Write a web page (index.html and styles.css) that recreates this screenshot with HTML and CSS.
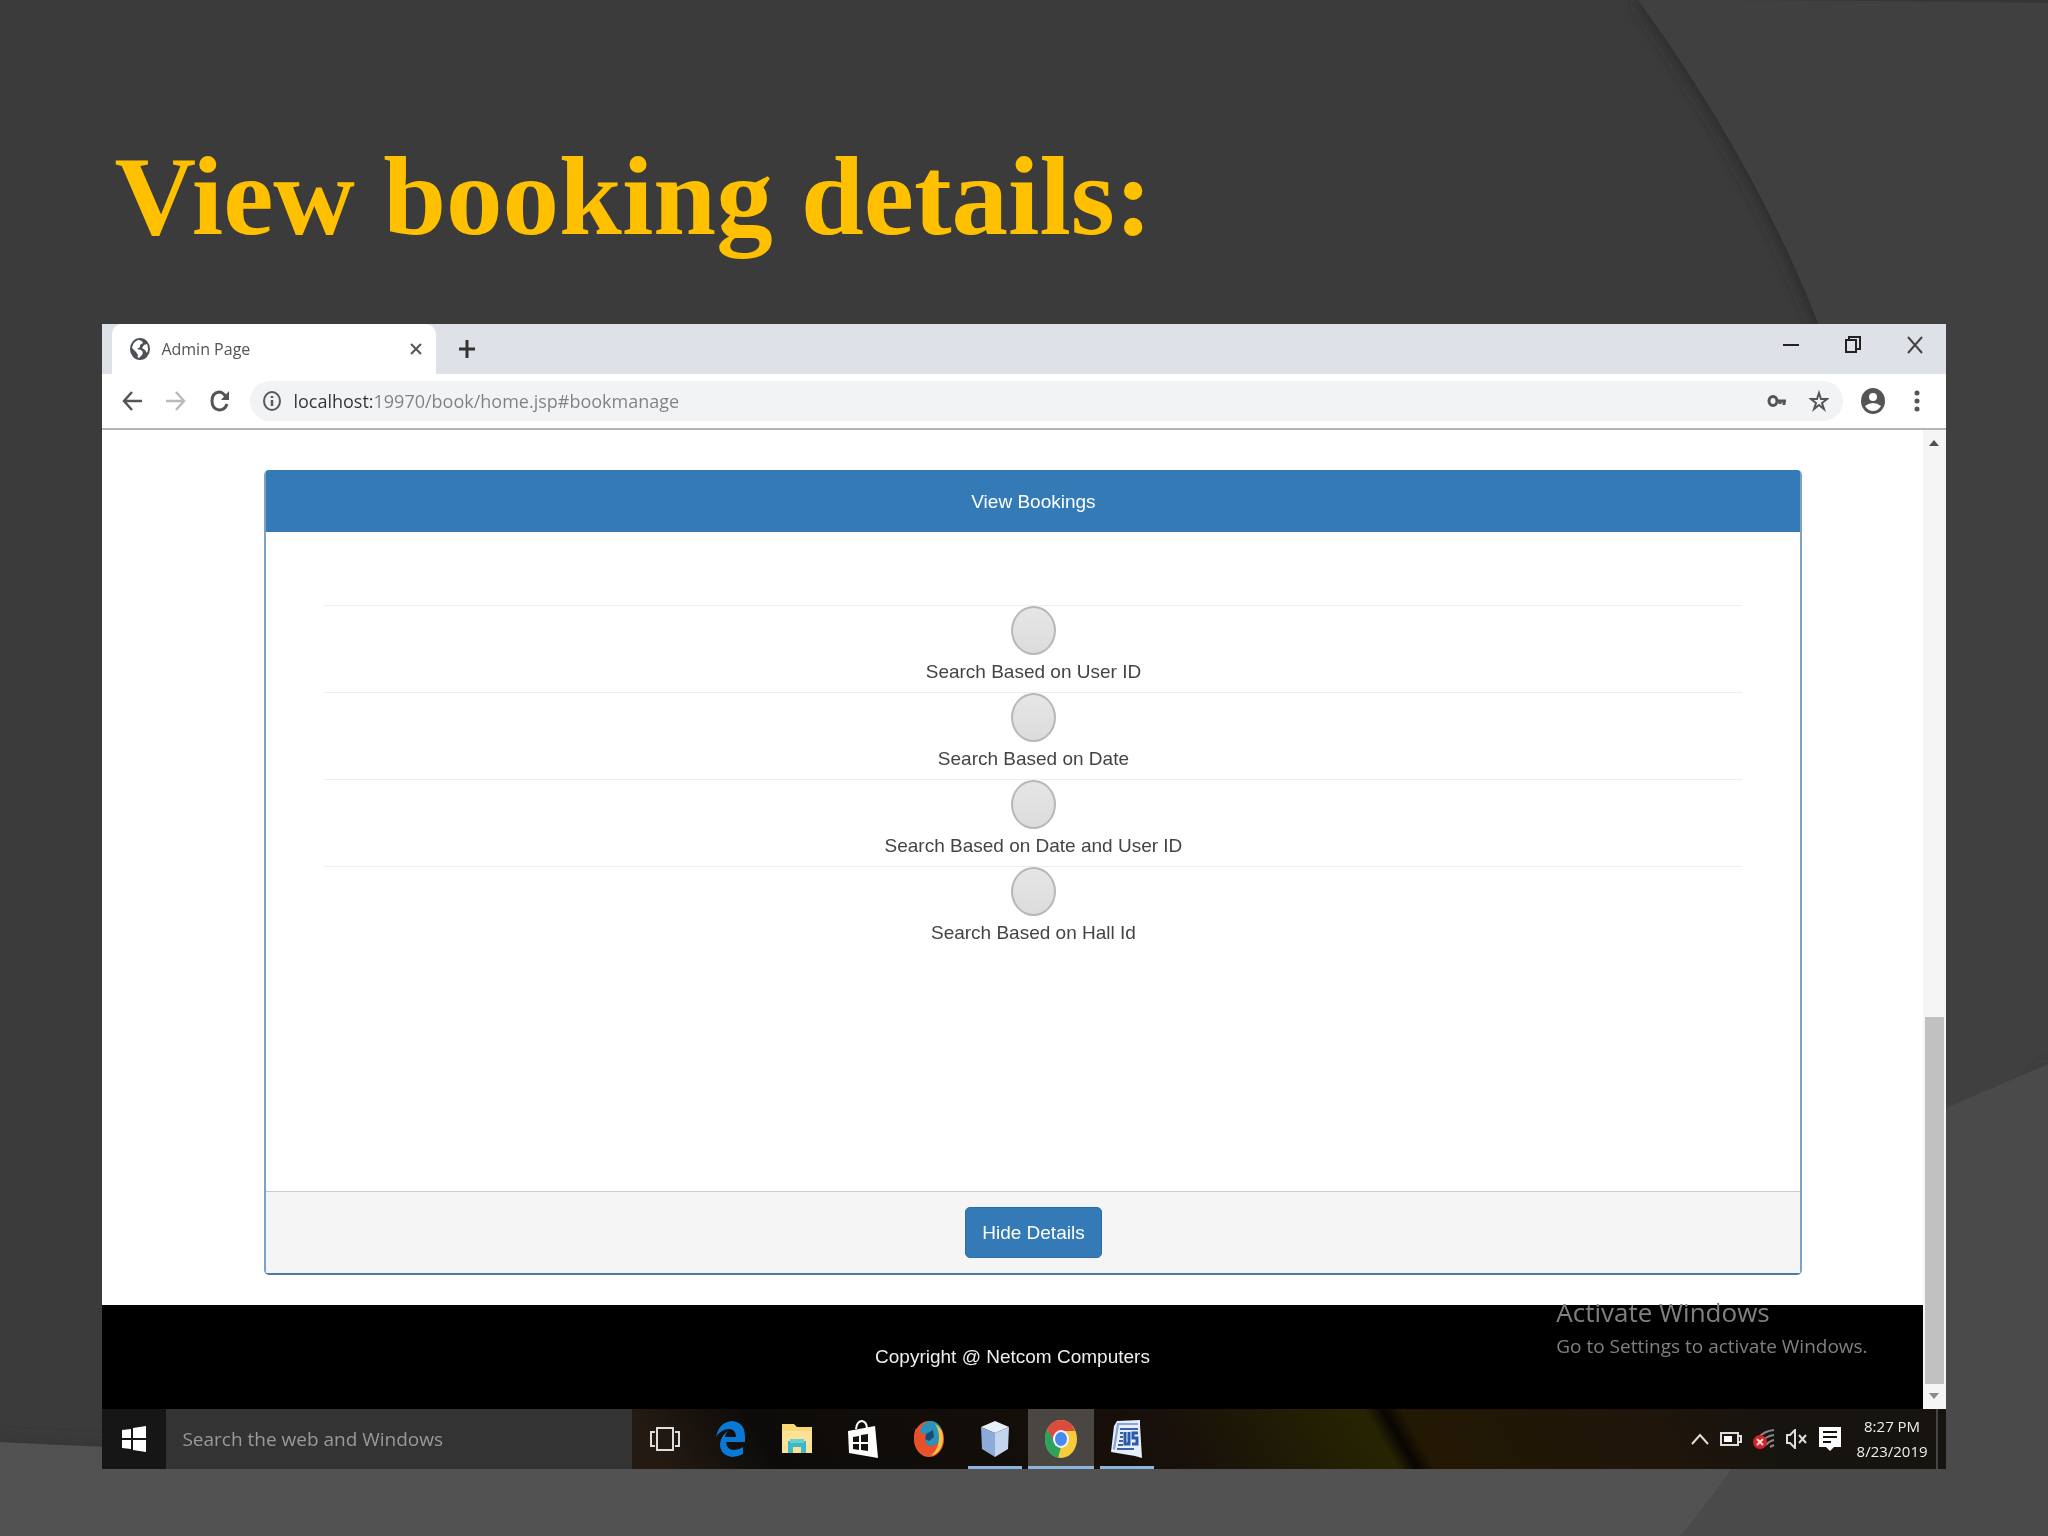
FILE: index.html
```
<!DOCTYPE html>
<html lang="en">
<head>
    <meta charset="UTF-8">
    <meta name="viewport" content="width=device-width, initial-scale=1.0">
    <title>View booking details</title>
    <link rel="stylesheet" href="styles.css">
</head>
<body>

<!-- slide background -->
<svg class="backdrop" viewBox="0 0 2048 1536" preserveAspectRatio="none" aria-hidden="true">
    <defs>
        <filter id="soft" x="-20%" y="-20%" width="140%" height="140%"><feGaussianBlur stdDeviation="7"/></filter>
        <linearGradient id="low" x1="0" y1="0" x2="0" y2="1">
            <stop offset="0" stop-color="#4f4f4f"/><stop offset="1" stop-color="#525252"/>
        </linearGradient>
    </defs>
    <rect width="2048" height="1536" fill="#3b3b3b"/>
    <path d="M1634 0Q1750 162 1814 323Q1900 600 1850 900L2048 900V0Z" fill="#2a2a2a" filter="url(#soft)"/>
    <path d="M1638 0Q1754 160 1818 323Q1900 600 1850 900L1850 1200H2048V0Z" fill="#404040"/>
    <path d="M1730 0H2048V3Q1900 1 1730 0Z" fill="#363636"/>
    <path d="M0 1438Q700 1480 1300 1366T2048 1062V1536H0Z" fill="#353535" filter="url(#soft)"/>
    <path d="M0 1442Q700 1480 1300 1370T2048 1064V1536H0Z" fill="url(#low)"/>
    <path d="M1680 1536Q1740 1465 1780 1390L1946 1108L2048 1064V1536Z" fill="#4a4a4a"/>
</svg>

<main class="slide">
    <h1 class="title">View booking details:</h1>

    <div class="screen">
        <div class="tabstrip">
            <div class="tab">
                <svg class="favicon" viewBox="0 0 20 22"><ellipse cx="10" cy="11" rx="10" ry="11" fill="#4d5156"/><path d="M8 2Q12 2 13 5L10 7V9L7 11L11 12Q14 14 12 17L9 20Q7 20 8 17L6 14L2 10Q3 4 8 2ZM14 7L17 6Q19 11 17 15L15 12L12 10Z" fill="#fff"/></svg>
                <span class="tab-name">Admin Page</span>
                <button class="icon-btn" aria-label="Close tab"><svg width="12" height="14" viewBox="0 0 12 14"><path d="M1 2L11 12M11 2L1 12" stroke="#555" stroke-width="2"/></svg></button>
            </div>
            <button class="icon-btn new-tab" aria-label="New tab"><svg width="18" height="20" viewBox="0 0 18 20"><path d="M9 1V19M1 10H17" stroke="#333" stroke-width="3"/></svg></button>
            <div class="win-buttons">
                <button class="icon-btn" aria-label="Minimize"><svg width="16" height="18" viewBox="0 0 16 18"><path d="M0 9H16" stroke="#222" stroke-width="2"/></svg></button>
                <button class="icon-btn" aria-label="Restore"><svg width="16" height="18" viewBox="0 0 16 18"><path d="M1 4H11V16H1ZM4 4V1H15V13H11" fill="none" stroke="#222" stroke-width="2"/></svg></button>
                <button class="icon-btn" aria-label="Close"><svg width="16" height="18" viewBox="0 0 16 18"><path d="M1 1L15 17M15 1L1 17" stroke="#444" stroke-width="2"/></svg></button>
            </div>
        </div>

        <div class="toolbar">
            <button class="icon-btn" aria-label="Back"><svg width="20" height="22" viewBox="0 0 20 22"><path d="M20 11H2M10 2L2 11L10 20" fill="none" stroke="#555" stroke-width="2.5"/></svg></button>
            <button class="icon-btn" aria-label="Forward"><svg width="20" height="22" viewBox="0 0 20 22"><path d="M0 11H18M10 2L18 11L10 20" fill="none" stroke="#bbb" stroke-width="2.5"/></svg></button>
            <button class="icon-btn" aria-label="Reload"><svg width="20" height="22" viewBox="0 0 20 22"><path d="M17 14Q15 20 9 20Q2 19 2 11Q2 3 9 2Q13 2 16 7" fill="none" stroke="#555" stroke-width="3"/><path d="M19 1V10H11Z" fill="#555"/></svg></button>
            <div class="omnibox">
                <svg width="20" height="22" viewBox="0 0 20 22"><ellipse cx="10" cy="11" rx="8" ry="9" fill="none" stroke="#5a5a5a" stroke-width="2"/><path d="M10 6V8M10 10V16" stroke="#5a5a5a" stroke-width="2.5"/></svg>
                <input class="url" type="text" aria-label="Address" value="localhost:19970/book/home.jsp#bookmanage">
                <svg width="20" height="14" viewBox="0 0 20 14"><ellipse cx="6" cy="7" rx="4" ry="4.500" fill="none" stroke="#555" stroke-width="3"/><path d="M9 7H19M17 7V11M13 7V10" stroke="#555" stroke-width="3" fill="none"/></svg>
                <svg class="star" width="20" height="22" viewBox="0 0 20 22"><path d="M10 3L12 9H18L13 13L15 19L10 15L5 19L7 13L2 9H8Z" fill="none" stroke="#555" stroke-width="2"/></svg>
            </div>
            <button class="icon-btn avatar" aria-label="Profile"><svg width="24" height="26" viewBox="0 0 24 26"><ellipse cx="12" cy="13" rx="12" ry="13" fill="#555"/><ellipse cx="12" cy="9" rx="4" ry="4" fill="#fff"/><path d="M4 18Q12 12 20 18Q17 23 12 23Q7 23 4 18Z" fill="#fff"/></svg></button>
            <button class="icon-btn" aria-label="Menu"><svg width="6" height="22" viewBox="0 0 6 22"><circle cx="3" cy="3" r="2.500" fill="#555"/><circle cx="3" cy="11" r="2.500" fill="#555"/><circle cx="3" cy="19" r="2.500" fill="#555"/></svg></button>
        </div>

        <div class="viewport">
            <div class="page">
                <form class="panel">
                    <div class="panel-heading">View Bookings</div>
                    <div class="panel-body">
                        <label class="option"><input type="radio" name="search" value="user">Search Based on User ID</label>
                        <label class="option"><input type="radio" name="search" value="date">Search Based on Date</label>
                        <label class="option"><input type="radio" name="search" value="both">Search Based on Date and User ID</label>
                        <label class="option"><input type="radio" name="search" value="hall">Search Based on Hall Id</label>
                    </div>
                    <div class="panel-footer"><button class="btn" type="button">Hide Details</button></div>
                </form>
                <footer class="copyright">Copyright @ Netcom Computers</footer>
            </div>
            <div class="scrollbar">
                <svg width="10" height="6" viewBox="0 0 10 6"><path d="M0 6L5 0L10 6Z" fill="#505050"/></svg>
                <div class="thumb"></div>
                <svg width="10" height="6" viewBox="0 0 10 6"><path d="M0 0L5 6L10 0Z" fill="#8c8c8c"/></svg>
            </div>
            <div class="watermark">
                <p class="wm-title">Activate Windows</p>
                <p class="wm-text">Go to Settings to activate Windows.</p>
            </div>
        </div>

        <div class="taskbar">
            <button class="start" aria-label="Start"><svg width="24" height="26" viewBox="0 0 24 26"><path d="M0 4L9 3V12H0ZM11 2L24 0V12H11ZM0 14H9V23L0 22ZM11 14H24V26L11 24Z" fill="#fff"/></svg></button>
            <input class="search" type="text" aria-label="Search" placeholder="Search the web and Windows">
            <div class="apps">
                <!-- task view -->
                <button class="app" aria-label="Task view"><svg width="30" height="24" viewBox="0 0 30 24"><path d="M7 1H23V23H7ZM5 5H1V19H5M25 5H29V19H25" fill="none" stroke="#ddd" stroke-width="2"/></svg></button>
                <!-- edge -->
                <button class="app" aria-label="Edge"><svg width="30" height="36" viewBox="0 0 30 36"><path d="M0 16Q3 1 16 0Q29 1 29 16V21H10Q11 29 18 29Q23 29 27 26V33Q22 36 16 36Q4 34 4 23Q5 14 12 10Q9 13 9 16H20Q20 9 14 8Q5 8 0 16Z" fill="#0a78d6"/></svg></button>
                <!-- file explorer -->
                <button class="app" aria-label="File Explorer"><svg width="30" height="30" viewBox="0 0 30 30"><path d="M0 0H12L15 3H30V29H0Z" fill="#f8d775"/><path d="M0 7H30V29H0Z" fill="#fbe297"/><path d="M6 17H24V29H19V23H11V29H6Z" fill="#3bb9c9"/><path d="M8 15H22V19H8Z" fill="#6ad0cf"/></svg></button>
                <!-- store -->
                <button class="app" aria-label="Store"><svg width="30" height="38" viewBox="0 0 30 38"><path d="M8 9Q9 1 14 1Q19 2 19 9" fill="none" stroke="#fff" stroke-width="2"/><path d="M0 11L27 6L30 38L1 33Z" fill="#fff"/><path d="M5 17L11 16V22H5ZM13 15L20 14V22H13ZM5 24H11V30L5 29ZM13 24H20V31L13 30Z" fill="#17120f"/></svg></button>
                <!-- firefox -->
                <button class="app" aria-label="Firefox"><svg width="32" height="38" viewBox="0 0 32 38"><ellipse cx="16" cy="19" rx="15" ry="18" fill="#e8582a"/><ellipse cx="18" cy="14" rx="11" ry="13" fill="#2a93b8"/><path d="M22 4Q30 8 30 18Q30 32 18 36Q26 28 26 18Q26 9 22 4Z" fill="#f6c245"/><path d="M3 8Q6 13 12 14L17 17L12 20Q13 26 19 26Q24 25 25 21Q25 32 15 34Q2 31 1 19Q1 12 3 8Z" fill="#e8502c"/><path d="M13 14L20 10L21 17L16 21L12 19Z" fill="#194a75"/></svg></button>
                <!-- netbeans -->
                <button class="app open" aria-label="NetBeans"><svg width="28" height="36" viewBox="0 0 28 36"><path d="M14 0L28 6L14 12L0 6Z" fill="#e8f0fb"/><path d="M0 6L14 12V36L1 28Z" fill="#8dabd9"/><path d="M28 6L14 12V36L27 28Z" fill="#c4d4ee"/></svg></button>
                <!-- chrome -->
                <button class="app open active" aria-label="Chrome"><svg width="32" height="38" viewBox="0 0 32 38"><ellipse cx="16" cy="19" rx="16" ry="19" fill="#f7cb3d"/><path d="M2 9Q7 0 16 0Q26 0 30 11H16L8 21Z" fill="#dd4b3e"/><path d="M2 9L10 23L16 27L13 38Q0 34 0 19Q0 13 2 9Z" fill="#2ca25a"/><ellipse cx="16" cy="19" rx="8" ry="9" fill="#f5f5f5"/><ellipse cx="16" cy="19" rx="6" ry="7" fill="#4a8af0"/></svg></button>
                <!-- word -->
                <button class="app open" aria-label="Word"><svg width="32" height="38" viewBox="0 0 32 38"><path d="M6 1L29 0V5L31 38L24 36L0 32L3 6Z" fill="#e7eefa"/><path d="M6 3H27V5H8L4 30L2 29Z" fill="#8aa6d6"/><path d="M9 9H27M9 13H12M9 17H12M8 21H12M7 25H12M6 29H23" stroke="#3a62a8" stroke-width="2"/><path d="M14 12V24H18V12M27 13H22V18H26V24H21" fill="none" stroke="#2b5aa8" stroke-width="3"/></svg></button>
            </div>
            <div class="tray">
                <svg width="18" height="12" viewBox="0 0 18 12"><path d="M1 11L9 2L17 11" fill="none" stroke="#ddd" stroke-width="2"/></svg>
                <svg width="22" height="16" viewBox="0 0 22 16"><path d="M1 2H18V14H1ZM18 5H21V11H18" fill="none" stroke="#ddd" stroke-width="2"/><path d="M4 5H12V11H4Z" fill="#fff"/></svg>
                <svg width="22" height="22" viewBox="0 0 22 22"><path d="M5 10Q11 3 21 2M9 14Q13 8 21 7M13 17Q16 13 21 12M17 19L21 17" fill="none" stroke="#888" stroke-width="2"/><ellipse cx="7" cy="14" rx="7" ry="7" fill="#d3222c"/><path d="M4 11L10 17M10 11L4 17" stroke="#ffd9d9" stroke-width="2"/></svg>
                <svg width="22" height="20" viewBox="0 0 22 20"><path d="M1 6H4L9 1V19L4 14H1Z" fill="none" stroke="#ddd" stroke-width="2"/><path d="M13 6L20 14M20 6L13 14" stroke="#ddd" stroke-width="2"/></svg>
                <svg width="22" height="24" viewBox="0 0 22 24"><path d="M0 0H22V20H15L11 24L7 20H0Z" fill="#fff"/><path d="M4 5H18M4 10H18M4 15H12" stroke="#17120f" stroke-width="2"/></svg>
                <div class="clock"><span>8:27 PM</span><span>8/23/2019</span></div>
            </div>
        </div>
    </div>
</main>

</body>
</html>
```
FILE: styles.css
```
* {
    box-sizing: border-box;
}

body {
    margin: 0;
    background-color: #3b3b3b;
    font-family: "Liberation Sans", Arial, sans-serif;
    font-size: 19px;
    color: #444;
}

button {
    font-family: inherit;
    cursor: pointer;
}

.backdrop {
    position: fixed;
    inset: 0;
    width: 100%;
    height: 100%;
    z-index: -1;
}

.slide {
    min-height: 100vh;
    padding: 132px 5% 68px;
}

.title {
    margin: 0 12px 64px;
    font-family: "Liberation Serif", "Times New Roman", serif;
    font-size: 113px;
    line-height: 128px;
    font-weight: bold;
    color: #ffc000;
}

.screen {
    background-color: #fff;
}

.icon-btn {
    display: flex;
    padding: 0;
    border: none;
    background: none;
}

/* browser tabs */
.tabstrip {
    display: flex;
    align-items: center;
    height: 50px;
    padding-left: 10px;
    background-color: #dee1e8;
    font-family: "Open Sans", "Noto Sans", sans-serif;
}

.tab {
    display: flex;
    align-items: center;
    width: 324px;
    height: 50px;
    padding: 0 14px 0 18px;
    border-radius: 10px 10px 0 0;
    background-color: #fff;
}

.favicon {
    width: 20px;
    height: 22px;
}

.tab-name {
    flex: 1;
    margin-left: 11px;
    font-size: 16px;
    color: #555;
}

.new-tab {
    margin-left: 22px;
}

.win-buttons {
    display: flex;
    gap: 46px;
    margin-left: auto;
    padding: 0 23px 8px 0;
}

.toolbar {
    display: flex;
    align-items: center;
    gap: 24px;
    height: 56px;
    padding: 0 26px 0 20px;
    border-bottom: 2px solid #b5b5b5;
}

.omnibox {
    display: flex;
    flex: 1;
    align-items: center;
    height: 40px;
    margin-left: -4px;
    padding: 0 14px 0 12px;
    border-radius: 20px;
    background-color: #f1f3f5;
}

.url {
    flex: 1;
    margin-left: 11px;
    padding: 0;
    border: none;
    font-family: "Open Sans", "Noto Sans", sans-serif;
    font-size: 18px;
    color: #777;
    /* host part is darker than the path */
    background: linear-gradient(90deg, #333 82px, #808080 82px);
    -webkit-background-clip: text;
    background-clip: text;
    -webkit-text-fill-color: transparent;
}

.star {
    margin-left: 22px;
}

.avatar {
    margin: 0 5px 0 -6px;
}

/* page shown in the browser */
.viewport {
    position: relative;
    display: flex;
}

.page {
    flex: 1;
    padding-top: 40px;
}

.panel {
    margin: 0 6.6% 30px 8.9%;
    border: 2px solid #7aa3c8;
    border-top-color: #337ab7;
    border-bottom-color: #4a7ba8;
    border-radius: 5px;
    text-align: center;
}

.panel-heading {
    padding: 18px;
    line-height: 24px;
    color: #fff;
    background-color: #337ab7;
}

.panel-body {
    min-height: 659px;
    padding: 73px 58px 0;
}

.option {
    display: block;
    height: 87px;
    border-top: 1px solid #eee;
    line-height: 34px;
}

.option input {
    display: block;
    appearance: none;
    width: 45px;
    height: 49px;
    margin: 0 auto;
    border: 2px solid #b8b8b8;
    border-radius: 50%;
    background: linear-gradient(#e6e6e6, #dcdcdc);
}

.panel-footer {
    padding: 15px;
    border-top: 1px solid #ccc;
    background-color: #f5f5f5;
}

.btn {
    height: 51px;
    padding: 0 16px;
    border: 1px solid #2e6da4;
    border-radius: 5px;
    font-size: 19px;
    color: #fff;
    background-color: #337ab7;
}

.copyright {
    padding: 40px;
    line-height: 24px;
    text-align: center;
    color: #eee;
    background-color: #000;
}

.scrollbar {
    display: flex;
    flex-direction: column;
    align-items: center;
    justify-content: space-between;
    width: 23px;
    padding: 10px 0;
    background-color: #f5f5f5;
}

.thumb {
    width: 19px;
    height: 367px;
    margin: auto 0 9px;
    background-color: #c1c1c1;
}

.watermark {
    position: absolute;
    right: 78px;
    bottom: 48px;
    font-family: "Open Sans", "Noto Sans", sans-serif;
    color: #808080;
}

.watermark p {
    margin: 0;
}

.wm-title {
    font-size: 26px;
    line-height: 38px;
}

.wm-text {
    font-size: 19px;
    line-height: 30px;
}

/* windows taskbar */
.taskbar {
    display: flex;
    height: 60px;
    background: linear-gradient(60deg, #241a12 30%, #0d0b09 36%, #18100a 58%, #252302 68%, #262403 69%, #080602 70%, #221803 71%, #1f150b 84%, #17140f 90%);
    font-family: "Open Sans", "Noto Sans", sans-serif;
}

.start {
    display: flex;
    align-items: center;
    justify-content: center;
    width: 64px;
    border: none;
    background-color: #161616;
}

.search {
    width: 466px;
    padding: 0 16px;
    border: none;
    font-family: inherit;
    font-size: 19px;
    background-color: #333;
}

.search::placeholder {
    color: #999;
}

.apps {
    display: flex;
    flex: 1;
}

.app {
    display: flex;
    align-items: center;
    justify-content: center;
    width: 66px;
    padding: 0;
    border: none;
    background: none;
}

.open {
    background: linear-gradient(#8ab4dc, #8ab4dc) bottom / 54px 3px no-repeat;
}

.active {
    background-color: #4a4743;
    background-size: 100% 3px;
}

.tray {
    display: flex;
    align-items: center;
    gap: 11px;
    margin-right: 8px;
    padding-right: 8px;
    border-right: 2px solid #444;
}

.clock {
    display: flex;
    flex-direction: column;
    align-items: center;
    margin-left: 5px;
    font-size: 15px;
    line-height: 25px;
    color: #eee;
}
```
